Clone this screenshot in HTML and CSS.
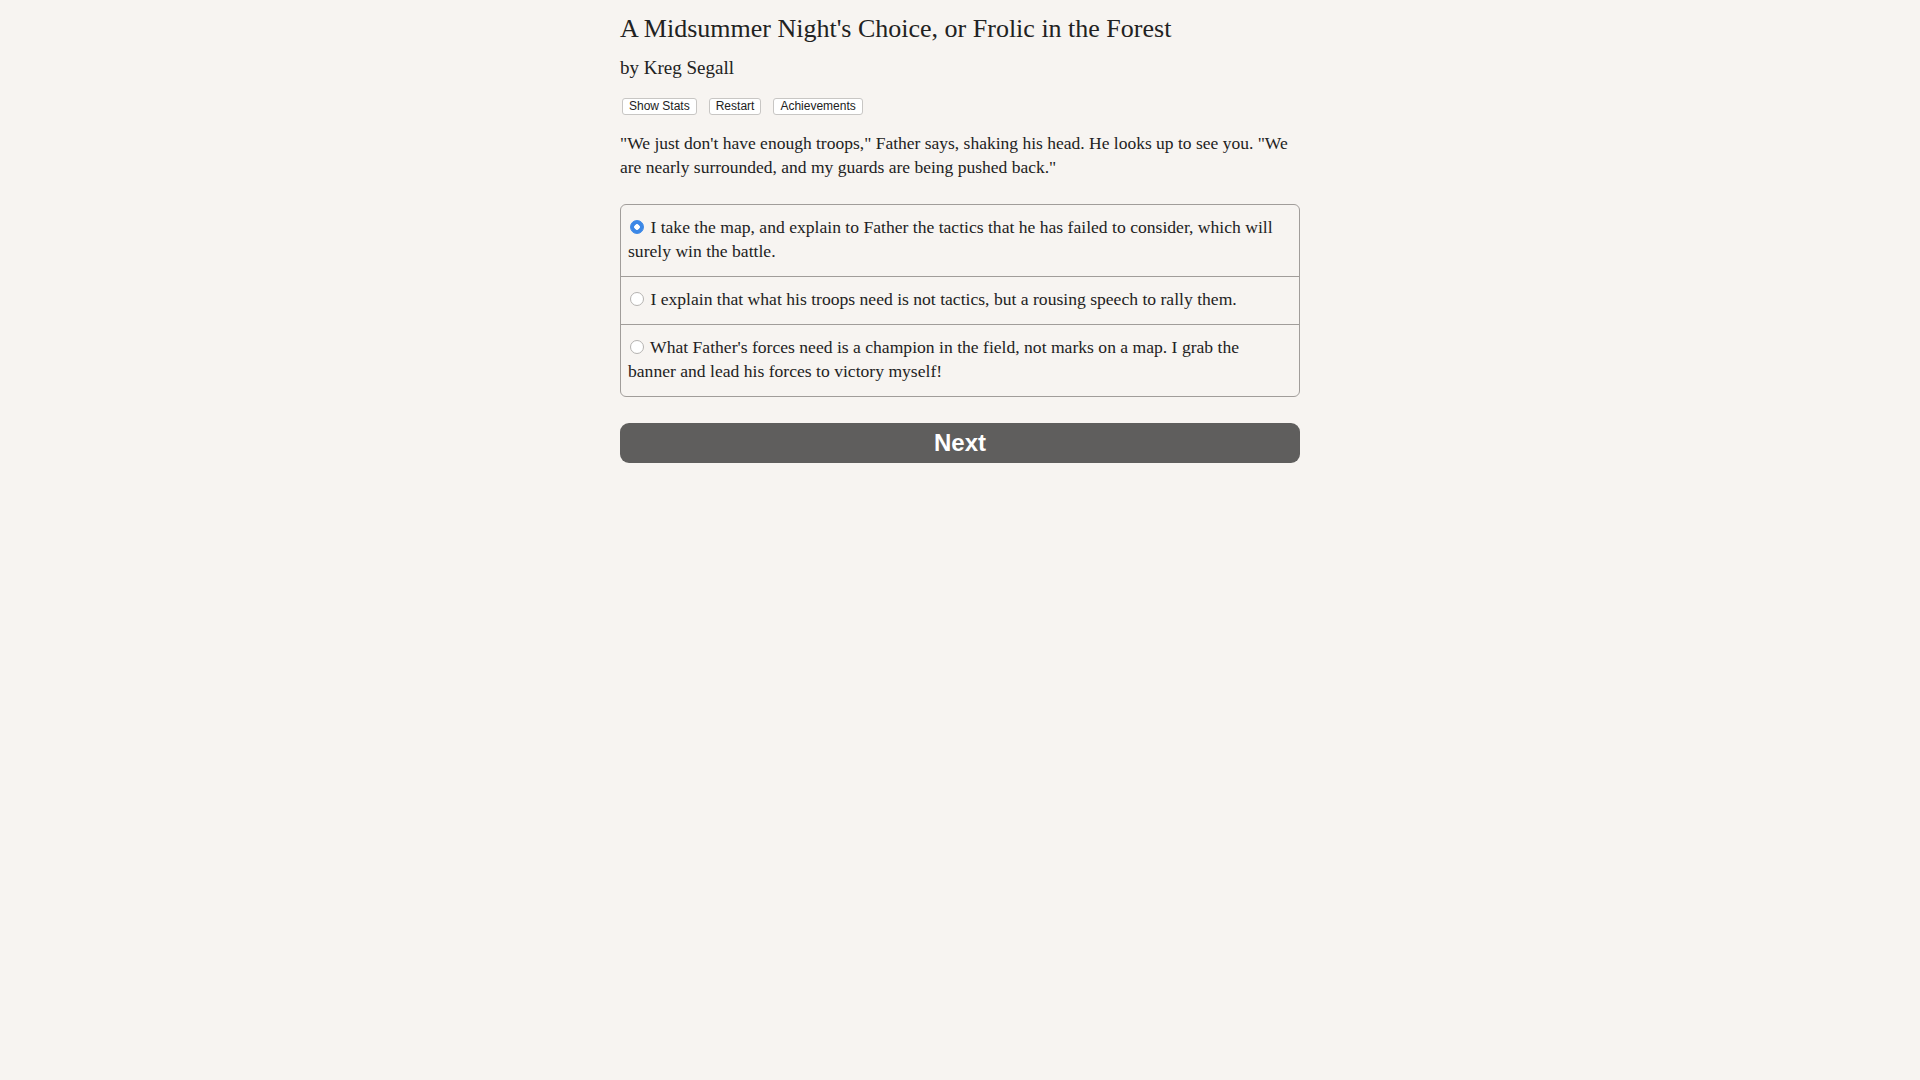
FILE: index.html
```html
<!DOCTYPE html>
<html lang="en">
<head>
    <meta charset="UTF-8">
    <title>A Midsummer Night's Choice, or Frolic in the Forest</title>
    <link rel="stylesheet" href="styles.css">
</head>
<body>
    <div class="container">
        <h1 class="title">A Midsummer Night's Choice, or Frolic in the Forest</h1>
        <h2 class="author">by Kreg Segall</h2>

        <div class="buttons">
            <button class="small-btn">Show Stats</button>
            <button class="small-btn">Restart</button>
            <button class="small-btn">Achievements</button>
        </div>

        <p class="text">"We just don't have enough troops," Father says, shaking his head. He looks up to see you. "We are nearly surrounded, and my guards are being pushed back."</p>

        <form>
            <div class="choices">
                <label class="choice"><input type="radio" name="choice" checked> I take the map, and explain to Father the tactics that he has failed to consider, which will surely win the battle.</label>
                <label class="choice"><input type="radio" name="choice"> I explain that what his troops need is not tactics, but a rousing speech to rally them.</label>
                <label class="choice"><input type="radio" name="choice"> What Father's forces need is a champion in the field, not marks on a map. I grab the banner and lead his forces to victory myself!</label>
            </div>
            <button type="button" class="next">Next</button>
        </form>
    </div>
</body>
</html>
```

FILE: styles.css
```css
body, html {
    margin: 0;
    background-color: #f7f4f1;
    color: #222;
    font-family: "Liberation Serif", "DejaVu Serif", serif;
}

.container {
    max-width: 680px;
    margin: 0 auto;
    padding-top: 13px;
}

.title {
    margin: 0;
    font-size: 26px;
    font-weight: normal;
    line-height: 32px;
}

.author {
    margin: 11px 0 0 0;
    font-size: 19px;
    font-weight: normal;
    line-height: 24px;
}

.buttons {
    display: flex;
    gap: 12px;
    margin-top: 18px;
    padding-left: 2px;
}

.small-btn {
    font-family: "Liberation Sans", Arial, sans-serif;
    font-size: 12px;
    color: #222;
    background-color: #fff;
    border: 1px solid #c8c6c4;
    border-radius: 3px;
    padding: 0 6px;
    height: 17px;
    line-height: 15px;
}

.text {
    margin: 16px 0 0 0;
    font-size: 17.5px;
    line-height: 24px;
}

.choices {
    margin-top: 25px;
    border: 1px solid #a19d9a;
    border-radius: 6px;
}

.choice {
    display: block;
    padding: 10px 20px 13px 7px;
    font-size: 17.6px;
    line-height: 24px;
    border-top: 1px solid #a19d9a;
}

.choice:first-child {
    border-top: none;
}

.choice input {
    appearance: none;
    margin: 0 2px 0 2px;
    width: 14px;
    height: 14px;
    vertical-align: -1px;
    border: 1px solid #b5b3b1;
    border-radius: 50%;
    background-color: #fff;
}

.choice input:checked {
    border-color: #3b87e6;
    background: radial-gradient(circle, #fff 0 2.5px, #3b87e6 3px);
}

.next {
    display: block;
    width: 100%;
    margin-top: 26px;
    height: 40px;
    border: none;
    border-radius: 9px;
    background-color: #5f5e5d;
    color: #fff;
    font-family: "Liberation Sans", Arial, sans-serif;
    font-weight: bold;
    font-size: 24px;
}
```
